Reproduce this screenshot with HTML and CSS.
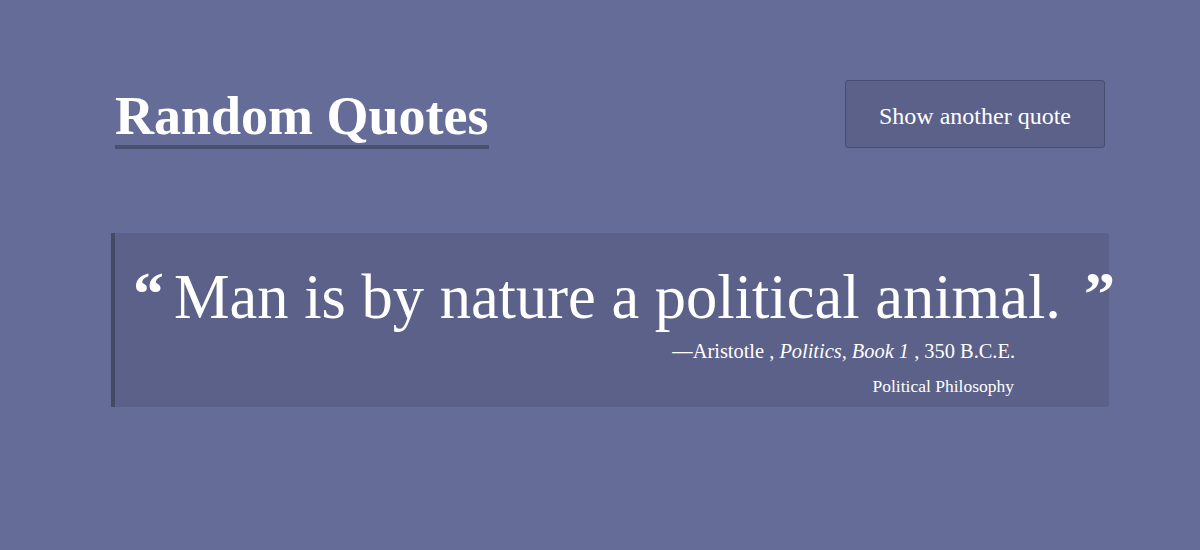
FILE: index.html
```html
<!DOCTYPE html>
<html lang="en">
<head>
<meta charset="utf-8">
<title>Random Quotes</title>
<link rel="stylesheet" href="styles.css">
</head>
<body>
<div class="page">
  <header class="header">
    <h1 class="title">Random Quotes</h1>
    <button class="btn" type="button">Show another quote</button>
  </header>
  <blockquote class="quote">
    <p class="quote-text"><span class="mark mark-open">“</span><span class="words">Man is by nature a political animal.</span><span class="mark mark-close">”</span></p>
    <p class="cite">—Aristotle , <em>Politics, Book 1</em> , 350 B.C.E.</p>
    <p class="tag">Political Philosophy</p>
  </blockquote>
</div>
</body>
</html>
```

FILE: styles.css
```css
html, body {
  margin: 0;
  padding: 0;
  background: #666c98;
  height: 100%;
}
body {
  font-family: "Liberation Serif", "DejaVu Serif", serif;
  color: #fff;
}
.page {
  width: 998px;
  margin-left: 111px;
  padding-top: 80px;
}
.header {
  display: flex;
  justify-content: space-between;
  align-items: flex-start;
  padding-left: 4px;
  padding-right: 4px;
}
.title {
  margin: 8px 0 0 0;
  font-size: 54px;
  font-weight: bold;
  line-height: 56px;
  border-bottom: 4px solid #4a5070;
  padding-bottom: 1px;
}
.btn {
  width: 260px;
  height: 68px;
  background: #5b6188;
  border: 1px solid #474d70;
  border-radius: 3px;
  color: #fff;
  font-family: inherit;
  font-size: 24px;
  padding: 5px 0 0 0;
  cursor: pointer;
}
.quote {
  margin: 84px 0 0 0;
  background: #5b6188;
  border-left: 4px solid #434a66;
  border-radius: 0 3px 3px 0;
  padding: 10px 0 0 0;
  height: 164px;
  box-sizing: content-box;
}
.quote-text {
  margin: 0;
  padding-left: 18px;
  font-size: 62.5px;
  line-height: 100px;
  white-space: nowrap;
}
.mark {
  font-weight: bold;
  font-size: 62px;
  vertical-align: 4px;
}
.mark-open {
  margin-right: 10px;
}
.mark-close {
  margin-left: 23px;
}
.cite {
  margin: -8px 94px 0 0;
  text-align: right;
  font-size: 20.4px;
  line-height: 24px;
}
.tag {
  margin: 13px 95px 0 0;
  text-align: right;
  font-size: 17.5px;
  line-height: 20px;
}
```
